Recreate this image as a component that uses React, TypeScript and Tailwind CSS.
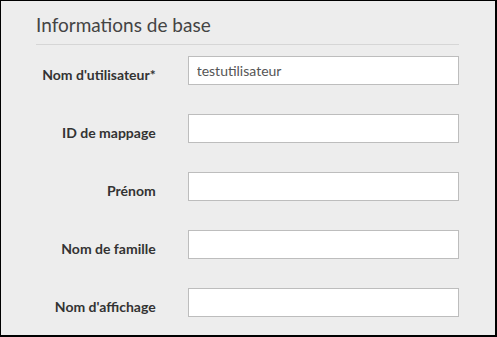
const fields = [
  { label: "Nom d'utilisateur*", value: "testutilisateur" },
  { label: "ID de mappage", value: "" },
  { label: "Prénom", value: "" },
  { label: "Nom de famille", value: "" },
  { label: "Nom d'affichage", value: "" },
];

export default function App() {
  return (
    <div
      className="box-border h-[337px] w-[497px] overflow-hidden border-t border-l border-r-2 border-b-2 border-black bg-[#ededed] pl-[35px] pr-[36px] pt-[12px]"
      style={{ fontFamily: "Lato, 'Noto Sans', sans-serif" }}
    >
      <h2 className="pb-[7px] text-[19px] leading-[24px] font-normal text-[#444]">
        Informations de base
      </h2>
      <div className="h-px bg-[#d6d6d6]" />
      <div className="mt-[11px] flex flex-col gap-[29px]">
        {fields.map((f) => (
          <div key={f.label} className="flex h-[29px] items-center">
            <label className="w-[120px] whitespace-nowrap pt-[8px] text-right text-[14px] leading-[18px] font-bold text-[#333]">
              {f.label}
            </label>
            <input
              className="ml-[32px] box-border h-[29px] w-[272px] border border-[#bdbdbd] bg-white px-[8px] text-[14px] text-[#555] outline-none"
              defaultValue={f.value}
              type="text"
            />
          </div>
        ))}
      </div>
    </div>
  );
}
